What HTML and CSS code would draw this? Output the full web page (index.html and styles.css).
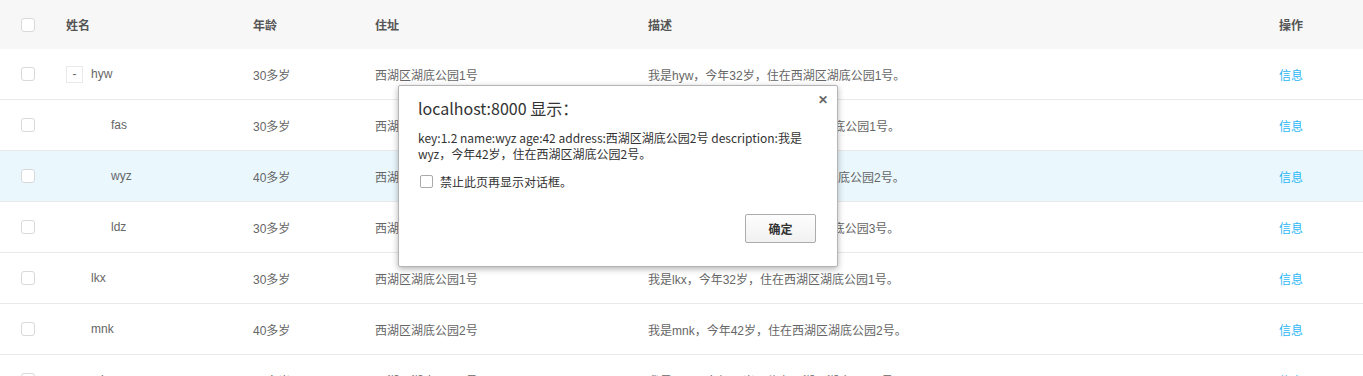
FILE: index.html
```html
<!DOCTYPE html>
<html lang="zh-CN">
<head>
    <meta charset="UTF-8">
    <title>Table</title>
    <link rel="stylesheet" href="styles.css">
</head>
<body>

    <table class="tbl">
        <colgroup>
            <col style="width:58px">
            <col style="width:187px">
            <col style="width:122px">
            <col style="width:273px">
            <col style="width:631px">
            <col>
        </colgroup>
        <thead>
            <tr>
                <th class="sel"><span class="chk"></span></th>
                <th>姓名</th>
                <th>年龄</th>
                <th>住址</th>
                <th>描述</th>
                <th>操作</th>
            </tr>
        </thead>
        <tbody>
            <tr>
                <td class="sel"><span class="chk"></span></td>
                <td><span class="expand">-</span>hyw</td>
                <td>30多岁</td>
                <td>西湖区湖底公园1号</td>
                <td>我是hyw，今年32岁，住在西湖区湖底公园1号。</td>
                <td><a class="link">信息</a></td>
            </tr>
            <tr>
                <td class="sel"><span class="chk"></span></td>
                <td><span class="indent"></span><span class="spacer"></span>fas</td>
                <td>30多岁</td>
                <td>西湖区湖底公园1号</td>
                <td>我是fas，今年32岁，住在西湖区湖底公园1号。</td>
                <td><a class="link">信息</a></td>
            </tr>
            <tr class="hover">
                <td class="sel"><span class="chk"></span></td>
                <td><span class="indent"></span><span class="spacer"></span>wyz</td>
                <td>40多岁</td>
                <td>西湖区湖底公园2号</td>
                <td>我是wyz，今年42岁，住在西湖区湖底公园2号。</td>
                <td><a class="link">信息</a></td>
            </tr>
            <tr>
                <td class="sel"><span class="chk"></span></td>
                <td><span class="indent"></span><span class="spacer"></span>ldz</td>
                <td>30多岁</td>
                <td>西湖区湖底公园3号</td>
                <td>我是ldz，今年32岁，住在西湖区湖底公园3号。</td>
                <td><a class="link">信息</a></td>
            </tr>
            <tr>
                <td class="sel"><span class="chk"></span></td>
                <td><span class="spacer"></span>lkx</td>
                <td>30多岁</td>
                <td>西湖区湖底公园1号</td>
                <td>我是lkx，今年32岁，住在西湖区湖底公园1号。</td>
                <td><a class="link">信息</a></td>
            </tr>
            <tr>
                <td class="sel"><span class="chk"></span></td>
                <td><span class="spacer"></span>mnk</td>
                <td>40多岁</td>
                <td>西湖区湖底公园2号</td>
                <td>我是mnk，今年42岁，住在西湖区湖底公园2号。</td>
                <td><a class="link">信息</a></td>
            </tr>
            <tr>
                <td class="sel"><span class="chk"></span></td>
                <td><span class="spacer"></span>sdw</td>
                <td>30多岁</td>
                <td>西湖区湖底公园3号</td>
                <td>我是sdw，今年32岁，住在西湖区湖底公园3号。</td>
                <td><a class="link">信息</a></td>
            </tr>
        </tbody>
    </table>

    <!-- alert() dialog -->
    <div class="dialog">
        <span class="close">&#x2715;</span>
        <div class="dlg-title">localhost:8000 显示：</div>
        <div class="dlg-msg">key:1.2 name:wyz age:42 address:西湖区湖底公园2号 description:我是wyz，今年42岁，住在西湖区湖底公园2号。</div>
        <label class="dlg-opt"><span class="dlg-chk"></span>禁止此页再显示对话框。</label>
        <div class="dlg-foot">
            <button class="dlg-btn">确定</button>
        </div>
    </div>

</body>
</html>
```

FILE: styles.css
```css
body {
    margin: 0;
    font-family: "Liberation Sans", "Noto Sans CJK SC", Arial, sans-serif;
    font-size: 12px;
    color: #666;
    background: #fff;
    overflow: hidden;
}

.tbl {
    width: 100%;
    border-collapse: collapse;
    table-layout: fixed;
}

.tbl th {
    height: 49px;
    padding: 0 8px;
    background: #f7f7f7;
    color: #555;
    font-weight: bold;
    text-align: left;
}

.tbl td {
    height: 50px;
    padding: 0 8px;
    border-bottom: 1px solid #e9e9e9;
    white-space: nowrap;
}

.tbl tr.hover td {
    background: #eaf8fe;
}

.tbl .sel {
    padding-left: 21px;
}

.chk {
    display: inline-block;
    width: 12px;
    height: 12px;
    border: 1px solid #d9d9d9;
    border-radius: 3px;
    background: #fff;
    vertical-align: middle;
}

.expand {
    display: inline-block;
    width: 15px;
    height: 15px;
    line-height: 14px;
    border: 1px solid #e9e9e9;
    background: #fff;
    text-align: center;
    color: #666;
    margin-right: 8px;
    vertical-align: middle;
    box-sizing: content-box;
}

.spacer {
    display: inline-block;
    width: 17px;
    margin-right: 8px;
}

.indent {
    display: inline-block;
    width: 20px;
}

.link {
    color: #2db7f5;
    text-decoration: none;
}

.dialog {
    position: absolute;
    left: 398px;
    top: 85px;
    width: 438px;
    height: 180px;
    background: #fff;
    border: 1px solid #b4b4b4;
    border-radius: 2px;
    box-shadow: 0 2px 6px rgba(0, 0, 0, 0.3);
    font-family: "Noto Sans CJK SC", "Liberation Sans", sans-serif;
    color: #333;
}

.close {
    position: absolute;
    right: 9px;
    top: 4px;
    font-size: 12px;
    font-weight: bold;
    color: #666;
}

.dlg-title {
    font-size: 16px;
    padding: 12px 19px 0;
    line-height: 21px;
}

.dlg-msg {
    font-size: 12px;
    line-height: 16px;
    padding: 11px 19px 0;
    width: 395px;
}

.dlg-opt {
    display: flex;
    align-items: center;
    font-size: 12px;
    padding: 11px 21px 0;
}

.dlg-chk {
    width: 11px;
    height: 11px;
    border: 1px solid #aaa;
    border-radius: 2px;
    margin-right: 7px;
}

.dlg-foot {
    display: flex;
    justify-content: flex-end;
    padding: 24px 21px 0;
}

.dlg-btn {
    width: 71px;
    height: 29px;
    border: 1px solid #acacac;
    border-radius: 2px;
    background: linear-gradient(#fdfdfd, #f1f1f1);
    font-family: "Noto Sans CJK SC", sans-serif;
    font-size: 12px;
    font-weight: bold;
    color: #333;
}
```
